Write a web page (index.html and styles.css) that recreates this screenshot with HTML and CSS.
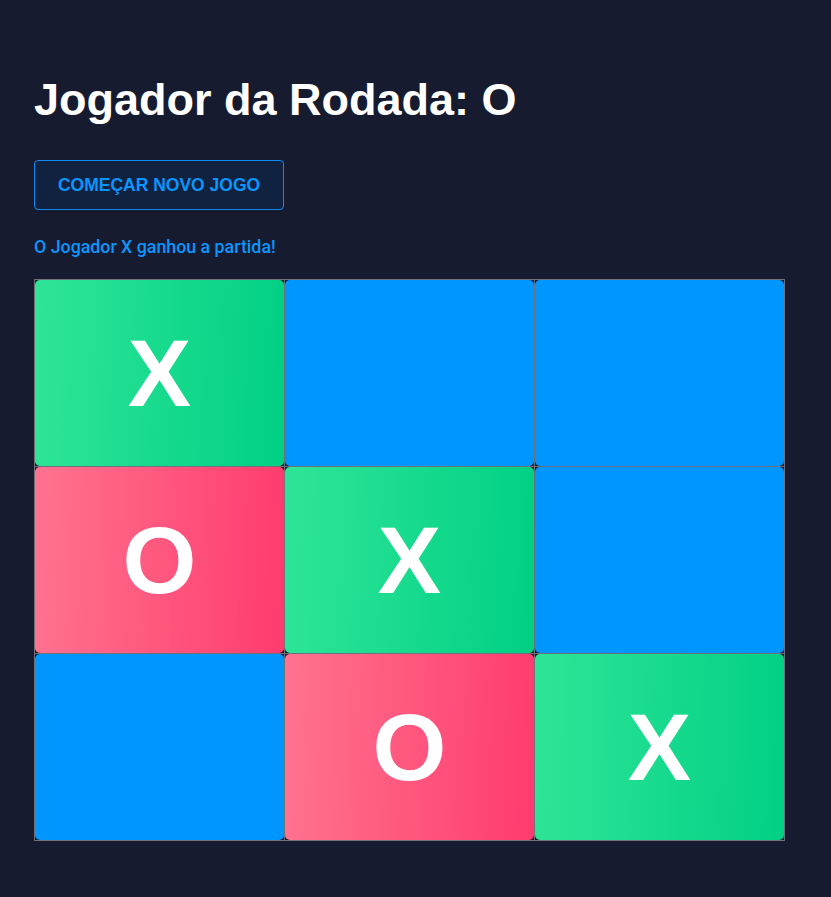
FILE: index.html
```html
<!DOCTYPE html>
<html lang="pt-BR">
<head>
<meta charset="utf-8">
<title>Jogo da Velha</title>
<link rel="stylesheet" href="styles.css">
</head>
<body>
<main class="game">
  <h1 class="title">Jogador da Rodada: O</h1>
  <button class="reset">COMEÇAR NOVO JOGO</button>
  <p class="status">O Jogador X ganhou a partida!</p>
  <div class="board">
    <div class="cell"><div class="tile tile-x">X</div></div>
    <div class="cell"><div class="tile"></div></div>
    <div class="cell"><div class="tile"></div></div>
    <div class="cell"><div class="tile tile-o">O</div></div>
    <div class="cell"><div class="tile tile-x">X</div></div>
    <div class="cell"><div class="tile"></div></div>
    <div class="cell"><div class="tile"></div></div>
    <div class="cell"><div class="tile tile-o">O</div></div>
    <div class="cell"><div class="tile tile-x">X</div></div>
  </div>
</main>
</body>
</html>
```
FILE: styles.css
```css
html, body {
  margin: 0;
  padding: 0;
  background: #161b2f;
  height: 100%;
}
body {
  font-family: "Liberation Sans", Arial, sans-serif;
  color: #fff;
}
.game {
  padding: 77px 34px 40px;
  display: flex;
  flex-direction: column;
  align-items: flex-start;
}
.title {
  margin: 0;
  font-size: 45px;
  line-height: 1;
  font-weight: 700;
}
.reset {
  margin-top: 38px;
  width: 250px;
  height: 50px;
  display: flex;
  align-items: center;
  justify-content: center;
  background: #10223f;
  border: 1px solid #0d8bf0;
  border-radius: 4px;
  color: #0a96ff;
  font-family: "Liberation Sans", Arial, sans-serif;
  font-weight: 700;
  font-size: 17.5px;
  padding: 0;
}
.status {
  margin: 26px 0 0;
  font-family: Roboto, "Liberation Sans", sans-serif;
  font-weight: 500;
  font-size: 17.8px;
  line-height: 21px;
  color: #0a96ff;
}
.board {
  margin-top: 22px;
  display: grid;
  grid-template-columns: repeat(3, 250px);
  grid-template-rows: repeat(3, 187px);
  border-top: 1px solid #6f7079;
  border-left: 1px solid #6f7079;
}
.cell {
  border-right: 1px solid #6f7079;
  border-bottom: 1px solid #6f7079;
  display: flex;
}
.tile {
  flex: 1;
  border-radius: 5px;
  background: #0096ff;
  display: flex;
  align-items: center;
  justify-content: center;
  font-family: "Liberation Sans", Arial, sans-serif;
  font-weight: 700;
  font-size: 95px;
  color: #fff;
  line-height: 1;
}
.tile-x {
  background: linear-gradient(92deg, #2fe597 0%, #00d084 100%);
}
.tile-o {
  background: linear-gradient(92deg, #ff7390 0%, #ff3b6e 100%);
}
```
